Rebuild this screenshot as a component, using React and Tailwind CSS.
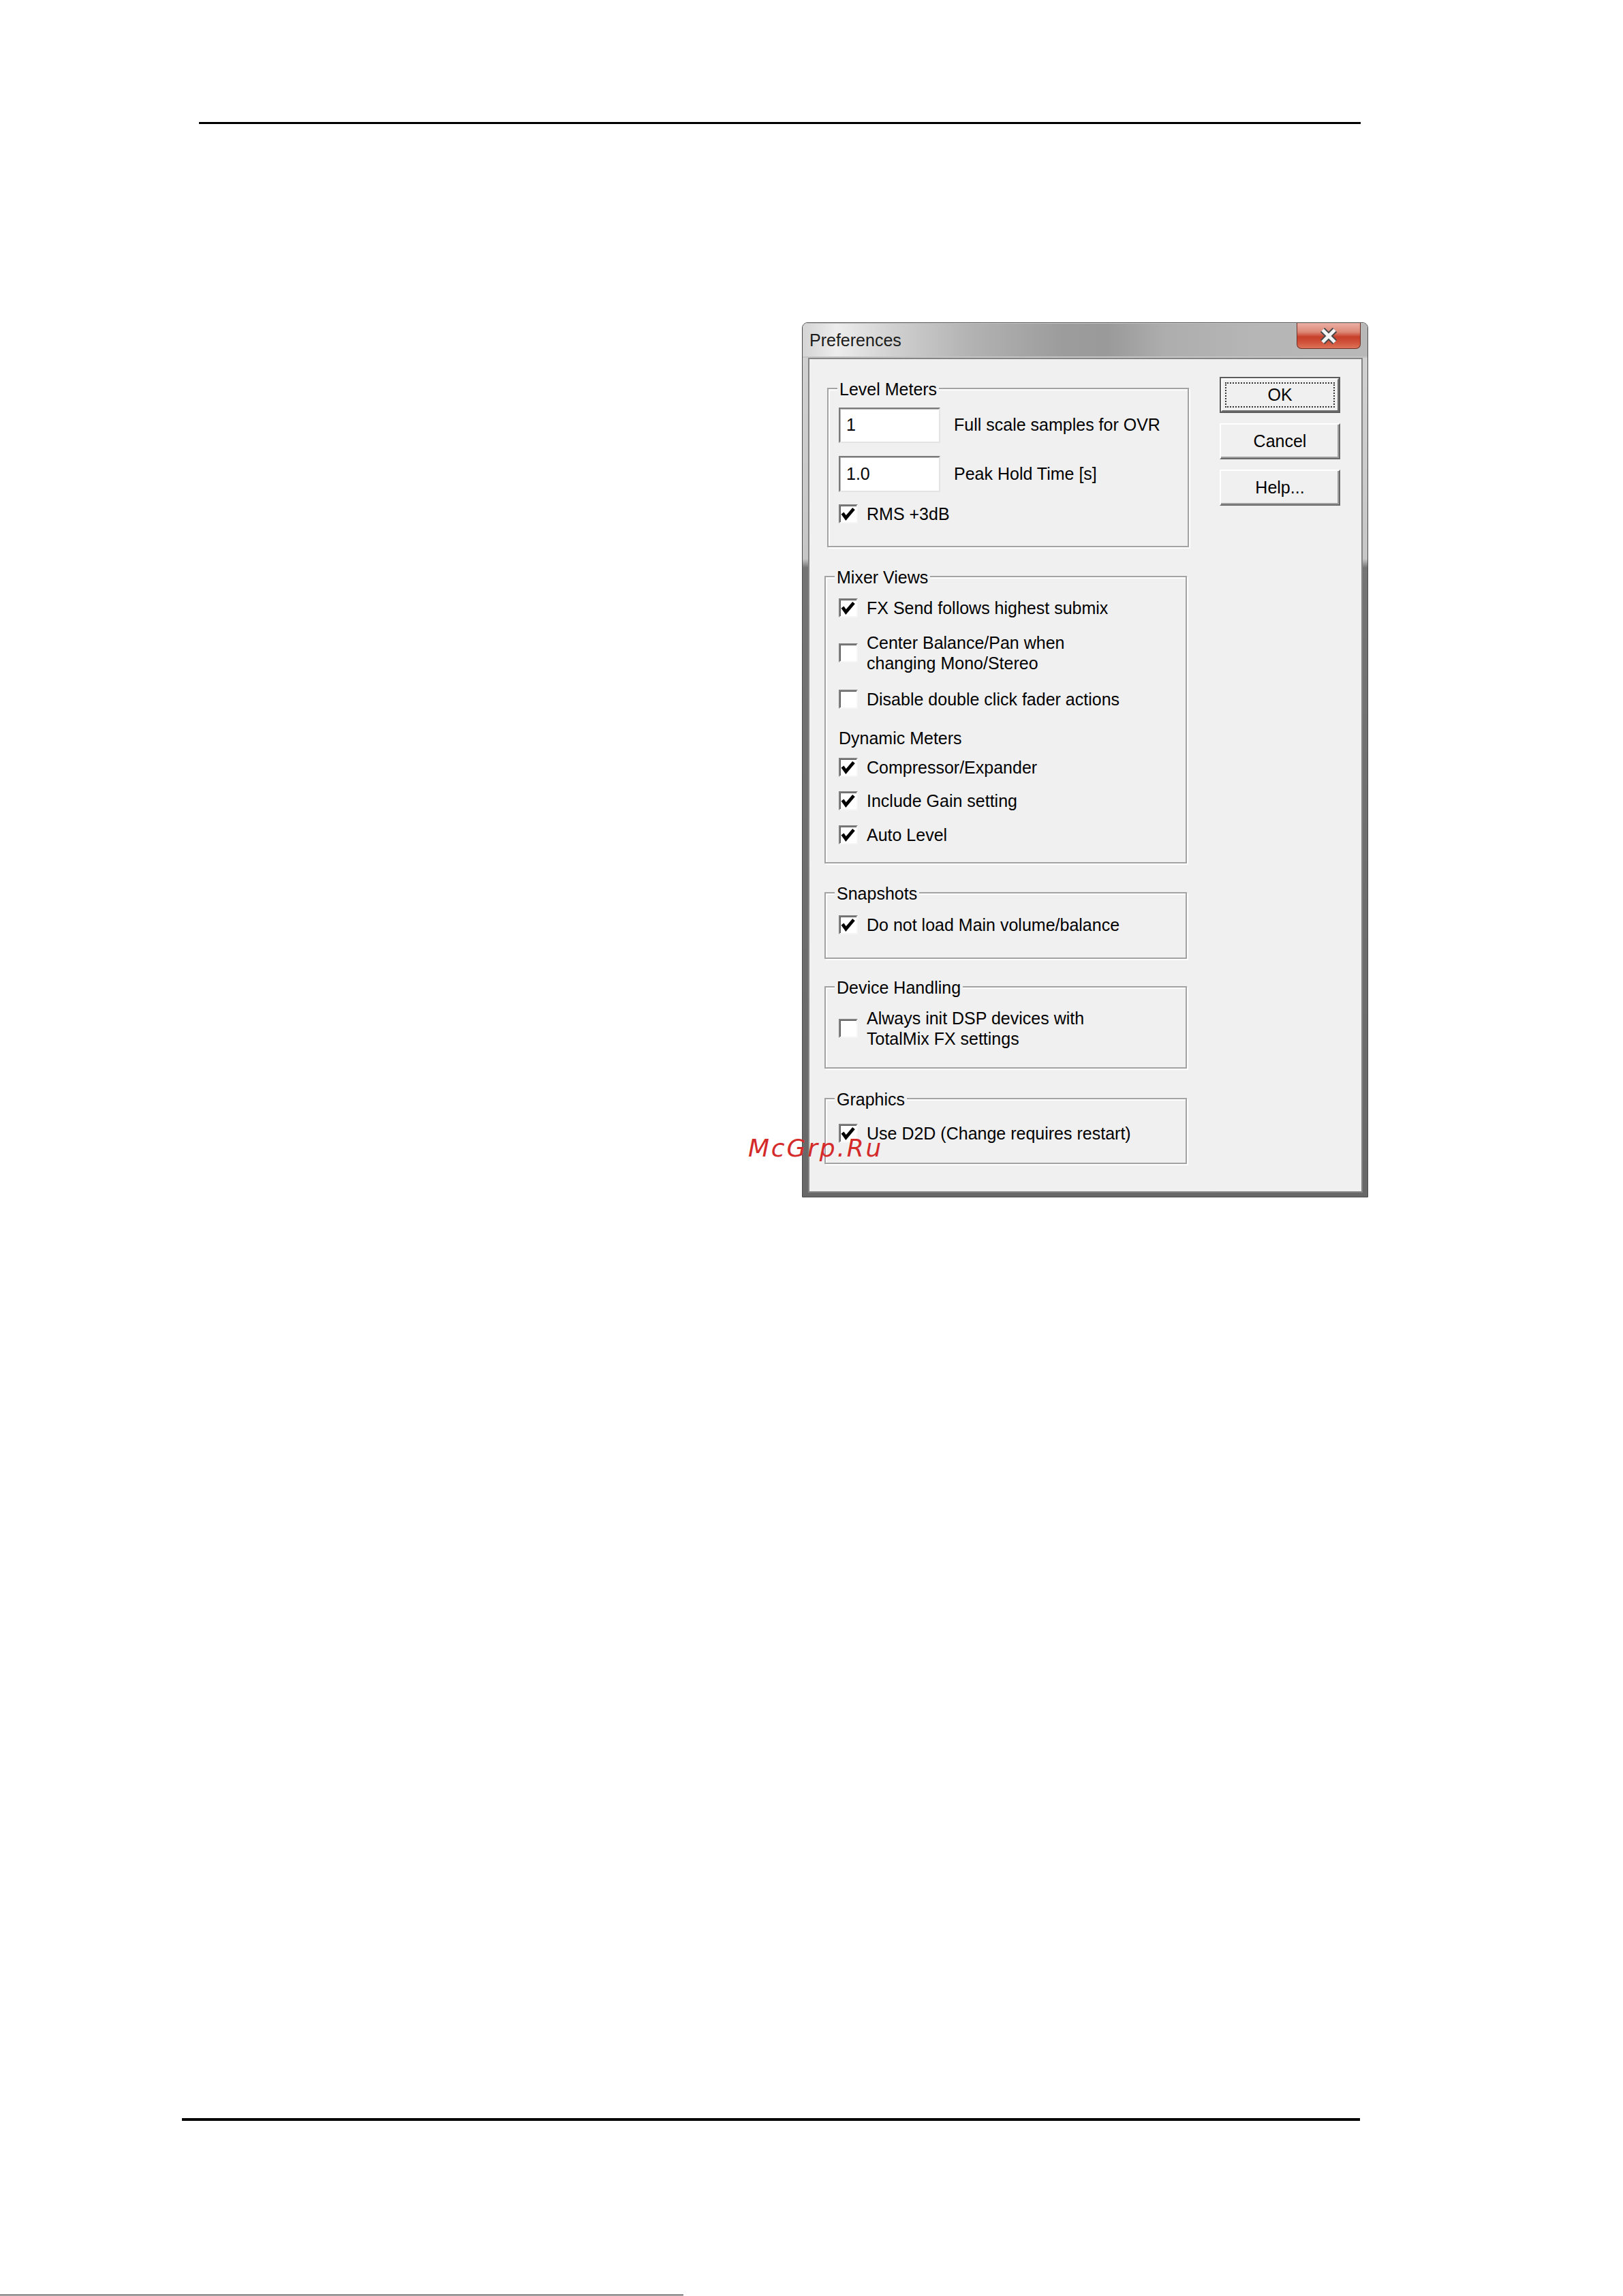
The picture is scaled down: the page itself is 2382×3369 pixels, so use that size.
import React from 'react'

const Box = ({ checked }) => (
  <span className="w-[28px] h-[28px] shrink-0 bg-white border-2 border-t-[#808080] border-l-[#808080] border-b-[#f6f6f6] border-r-[#f6f6f6] shadow-[inset_1px_1px_0_#5e5e5e] flex items-center justify-center">
    {checked && (
      <svg viewBox="0 0 24 24" className="w-[24px] h-[24px]">
        <path d="M3.5 11 L8.5 18 L20 4.5" fill="none" stroke="#000" strokeWidth="4.8" />
      </svg>
    )}
  </span>
)

const Row = ({ checked, children, className = '' }) => (
  <div className={`flex items-center gap-[13px] ${className}`}>
    <Box checked={checked} />
    <span className="leading-[30px]">{children}</span>
  </div>
)

const Group = ({ title, className = '', children }) => (
  <div className={`relative border-2 border-[#a3a3a3] shadow-[inset_2px_2px_0_#ffffff,2px_2px_0_#ffffff] ${className}`}>
    <span className="absolute left-[13px] top-[-15px] px-[3px] bg-[#f0f0f0] leading-[30px]">{title}</span>
    {children}
  </div>
)

const Edit = ({ value, className = '' }) => (
  <div className={`w-[149px] bg-white border-2 border-t-[#7a7a7a] border-l-[#7a7a7a] border-b-[#e4e4e4] border-r-[#e4e4e4] shadow-[inset_1px_1px_0_#b8b8b8] flex items-center pl-[9px] ${className}`}>
    {value}
  </div>
)

const Button = ({ children }) => (
  <div className="w-[177px] h-[53px] bg-[#f0f0f0] border-2 border-t-white border-l-white border-b-[#696969] border-r-[#696969] shadow-[inset_-2px_-2px_0_#a0a0a0] flex items-center justify-center">
    {children}
  </div>
)

const Dialog = () => (
  <div className="ml-[1177px] mt-[291px] w-[831px] h-[1284px] border border-[#4a4a4a] rounded-t-[8px] bg-[linear-gradient(to_bottom,#d2d2d2_0%,#c6c6c6_27%,#747474_28%,#686868_100%)] flex flex-col overflow-hidden font-['Liberation_Sans',Arial,sans-serif] text-[25px] text-black">
    <div className="h-[51px] shrink-0 flex justify-between bg-[linear-gradient(to_right,#d4d4d4_0%,#ededed_6%,#d0d0d0_16%,#b2b2b2_30%,#9c9c9c_46%,#9a9a9a_54%,#adadad_64%,#b6b6b6_80%,#b8b8b8_100%)] shadow-[inset_0_1px_0_#cfcfcf,inset_0_-2px_0_#c4c4c4]">
      <span className="self-center pl-[10px] text-[#1c1c1c]">Preferences</span>
      <div className="mr-[10px] w-[94px] h-[38px] rounded-b-[7px] border border-t-0 border-[#6e3027] bg-[linear-gradient(to_bottom,#eab0a4_0%,#dd8a78_35%,#c63f2a_55%,#d05038_75%,#dc7358_100%)] flex items-center justify-center">
        <svg viewBox="0 0 28 24" className="w-[28px] h-[24px]">
          <path d="M5 3 L23 21 M23 3 L5 21" stroke="#4a4a4a" strokeWidth="9" />
          <path d="M5 3 L23 21 M23 3 L5 21" stroke="#f4f4f4" strokeWidth="5" />
        </svg>
      </div>
    </div>

    <div className="mx-[8px] mb-[6px] mr-[7px] flex-1 border-2 border-[#858585] bg-[#f0f0f0] flex">
      <div className="w-[554px] pl-[22px] pt-[42px] flex flex-col">
        <Group title="Level Meters" className="ml-[4px] w-[531px] h-[234px] pl-[15px] pt-[27px]">
          <div className="flex items-center gap-[20px]">
            <Edit value="1" className="h-[52px]" />
            <span>Full scale samples for OVR</span>
          </div>
          <div className="mt-[19px] flex items-center gap-[20px]">
            <Edit value="1.0" className="h-[53px]" />
            <span>Peak Hold Time [s]</span>
          </div>
          <Row checked className="mt-[17px]">RMS +3dB</Row>
        </Group>

        <Group title="Mixer Views" className="mt-[42px] w-[532px] h-[422px] pl-[19px] pt-[30px]">
          <Row checked>FX Send follows highest submix</Row>
          <Row className="mt-[21px]">
            Center Balance/Pan when
            <br />
            changing Mono/Stereo
          </Row>
          <Row className="mt-[23px]">Disable double click fader actions</Row>
          <div className="mt-[27px] leading-[30px]">Dynamic Meters</div>
          <Row checked className="mt-[13px]">Compressor/Expander</Row>
          <Row checked className="mt-[19px]">Include Gain setting</Row>
          <Row checked className="mt-[20px]">Auto Level</Row>
        </Group>

        <Group title="Snapshots" className="mt-[42px] w-[532px] h-[98px] pl-[19px] pt-[31px]">
          <Row checked>Do not load Main volume/balance</Row>
        </Group>

        <Group title="Device Handling" className="mt-[40px] w-[532px] h-[121px] pl-[19px] pt-[30px]">
          <Row>
            Always init DSP devices with
            <br />
            TotalMix FX settings
          </Row>
        </Group>

        <Group title="Graphics" className="mt-[43px] w-[532px] h-[97px] pl-[19px] pt-[35px]">
          <Row checked>Use D2D (Change requires restart)</Row>
        </Group>
      </div>

      <div className="ml-[48px] pt-[26px] flex flex-col gap-[15px]">
        <div className="w-[177px] h-[53px] border-2 border-[#5c5c5c] flex">
          <div className="flex-1 bg-[#f0f0f0] border-2 border-t-white border-l-white border-b-[#6e6e6e] border-r-[#6e6e6e] flex">
            <div className="flex-1 m-[4px] border-2 border-dotted border-[#333] flex items-center justify-center">OK</div>
          </div>
        </div>
        <Button>Cancel</Button>
        <Button>Help...</Button>
      </div>
    </div>
  </div>
)

export default function App() {
  return (
    <div className="relative w-[2382px] h-[3369px] bg-white overflow-hidden">
      <div className="mt-[179px] ml-[292px] w-[1705px] h-[3px] bg-black" />
      <Dialog />
      <div className="mt-[1351px] ml-[267px] w-[1729px] h-[4px] bg-black" />
      <div className="mt-[255px] w-[1003px] h-[1px] bg-black" />
      <span className="absolute left-[1098px] top-[1667px] leading-none text-[36px] italic tracking-[2.8px] text-[#d42a2a] font-['DejaVu_Sans',sans-serif]">
        McGrp.Ru
      </span>
    </div>
  )
}
